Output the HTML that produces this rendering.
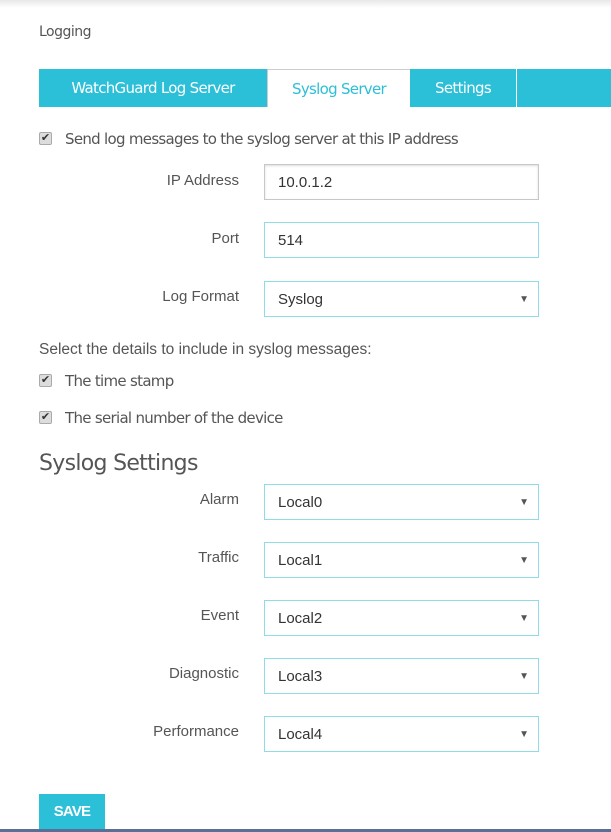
<!DOCTYPE html>
<html><head><style>
*{box-sizing:border-box;margin:0;padding:0}
body{width:611px;height:832px;overflow:hidden;background:#fff;font-family:"Liberation Sans",sans-serif;color:#555;position:relative}
.shadow{position:absolute;top:0;left:0;right:0;height:8px;background:linear-gradient(#e8e8e8,#fff)}
.abs{position:absolute}
.tabs{position:absolute;left:39px;top:69px;width:572px;height:38px;background:#2bbfd8}
.tab{position:absolute;top:0;height:38px;line-height:38px;text-align:center;color:#fff;font-size:15px;font-family:"DejaVu Sans",sans-serif;letter-spacing:-0.7px}
.lbl{position:absolute;width:200px;left:39px;text-align:right;font-size:15px;color:#555}
.inp{position:absolute;left:264px;width:275px;height:36px;border:1px solid #8fdbe8;font-size:15px;color:#333;padding-left:13px;line-height:36px}
.inp .arr{position:absolute;right:9px;top:0;font-size:10px;color:#555}
.cb{position:absolute;left:39px;width:13px;height:13px;border:1px solid #aaa;border-radius:2px;background:#ddd;font-size:11px;line-height:11px;text-align:center;color:#333}
.txt{position:absolute;left:65px;font-size:15px;color:#555;font-family:"DejaVu Sans",sans-serif;letter-spacing:-0.7px}
</style></head><body>
<div class="shadow"></div>
<div class="abs" style="left:39px;top:24px;font-size:14px;font-family:'DejaVu Sans',sans-serif;color:#555;letter-spacing:-0.5px">Logging</div>
<div class="tabs">
<div class="tab" style="left:0;width:228px">WatchGuard Log Server</div>
<div class="tab" style="left:228px;width:143px;background:#fff;color:#2bbfd8;border-top:1px solid #ccc;border-left:1px solid #ccc">Syslog Server</div>
<div class="tab" style="left:371px;width:106px">Settings</div>
<div class="abs" style="left:477px;top:0;width:1px;height:38px;background:#fff"></div>
</div>
<div class="cb" style="top:132px">✔</div>
<div class="txt" style="top:130px">Send log messages to the syslog server at this IP address</div>
<div class="lbl" style="top:172px">IP Address</div>
<div class="inp" style="top:164px;border-color:#c8c8c8;box-shadow:inset 0 1px 2px #ddd">10.0.1.2</div>
<div class="lbl" style="top:230px">Port</div>
<div class="inp" style="top:222px">514</div>
<div class="lbl" style="top:288px">Log Format</div>
<div class="inp" style="top:281px">Syslog<span class="arr">▼</span></div>
<div class="abs" style="left:39px;top:341px;font-size:15.5px;color:#555">Select the details to include in syslog messages:</div>
<div class="cb" style="top:374px">✔</div>
<div class="txt" style="top:372px">The time stamp</div>
<div class="cb" style="top:411px">✔</div>
<div class="txt" style="top:409px">The serial number of the device</div>
<div class="abs" style="left:39px;top:451px;font-size:22px;color:#555;font-family:'DejaVu Sans',sans-serif;letter-spacing:-0.7px">Syslog Settings</div>
<div class="lbl" style="top:491px">Alarm</div>
<div class="inp" style="top:484px">Local0<span class="arr">▼</span></div>
<div class="lbl" style="top:549px">Traffic</div>
<div class="inp" style="top:542px">Local1<span class="arr">▼</span></div>
<div class="lbl" style="top:607px">Event</div>
<div class="inp" style="top:600px">Local2<span class="arr">▼</span></div>
<div class="lbl" style="top:665px">Diagnostic</div>
<div class="inp" style="top:658px">Local3<span class="arr">▼</span></div>
<div class="lbl" style="top:723px">Performance</div>
<div class="inp" style="top:716px">Local4<span class="arr">▼</span></div>
<div class="abs" style="left:39px;top:794px;width:66px;height:35px;background:#2bbfd8;color:#fff;font-weight:bold;font-size:15px;text-align:center;line-height:36px;letter-spacing:-0.8px">SAVE</div>
<div class="abs" style="left:0;top:829px;width:611px;height:3px;background:#5a6f95"></div>
</body></html>
